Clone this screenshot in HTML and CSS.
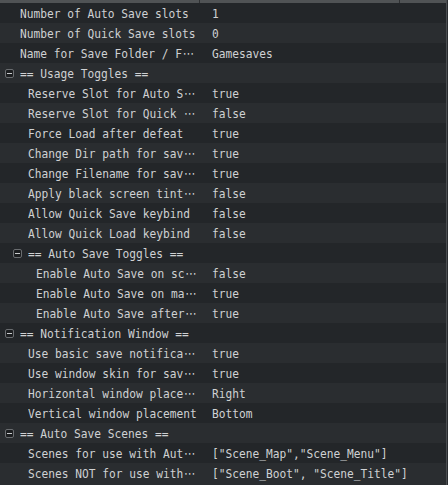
FILE: index.html
```html
<!DOCTYPE html>
<html>
<head>
<meta charset="utf-8">
<link rel="stylesheet" href="styles.css">
</head>
<body>
<div class="frame">
  <div class="header"><div class="hcol"></div><div class="hcol"></div></div>
  <div class="tree">
    <div class="row"><div class="name d0"><span class="t">Number of Auto Save slots</span></div><div class="value"><span class="t">1</span></div></div>
    <div class="row"><div class="name d0"><span class="t">Number of Quick Save slots</span></div><div class="value"><span class="t">0</span></div></div>
    <div class="row"><div class="name d0"><span class="t">Name for Save Folder / F<span class="el">⋯</span></span></div><div class="value"><span class="t">Gamesaves</span></div></div>
    <div class="row"><div class="name d0 group"><span class="toggle"></span><span class="t">== Usage Toggles ==</span></div><div class="value"></div></div>
    <div class="row"><div class="name d1"><span class="t">Reserve Slot for Auto S<span class="el">⋯</span></span></div><div class="value"><span class="t">true</span></div></div>
    <div class="row"><div class="name d1"><span class="t">Reserve Slot for Quick <span class="el">⋯</span></span></div><div class="value"><span class="t">false</span></div></div>
    <div class="row"><div class="name d1"><span class="t">Force Load after defeat</span></div><div class="value"><span class="t">true</span></div></div>
    <div class="row"><div class="name d1"><span class="t">Change Dir path for sav<span class="el">⋯</span></span></div><div class="value"><span class="t">true</span></div></div>
    <div class="row"><div class="name d1"><span class="t">Change Filename for sav<span class="el">⋯</span></span></div><div class="value"><span class="t">true</span></div></div>
    <div class="row"><div class="name d1"><span class="t">Apply black screen tint<span class="el">⋯</span></span></div><div class="value"><span class="t">false</span></div></div>
    <div class="row"><div class="name d1"><span class="t">Allow Quick Save keybind</span></div><div class="value"><span class="t">false</span></div></div>
    <div class="row"><div class="name d1"><span class="t">Allow Quick Load keybind</span></div><div class="value"><span class="t">false</span></div></div>
    <div class="row"><div class="name d1 group"><span class="toggle"></span><span class="t">== Auto Save Toggles ==</span></div><div class="value"></div></div>
    <div class="row"><div class="name d2"><span class="t">Enable Auto Save on sc<span class="el">⋯</span></span></div><div class="value"><span class="t">false</span></div></div>
    <div class="row"><div class="name d2"><span class="t">Enable Auto Save on ma<span class="el">⋯</span></span></div><div class="value"><span class="t">true</span></div></div>
    <div class="row"><div class="name d2"><span class="t">Enable Auto Save after<span class="el">⋯</span></span></div><div class="value"><span class="t">true</span></div></div>
    <div class="row"><div class="name d0 group"><span class="toggle"></span><span class="t">== Notification Window ==</span></div><div class="value"></div></div>
    <div class="row"><div class="name d1"><span class="t">Use basic save notifica<span class="el">⋯</span></span></div><div class="value"><span class="t">true</span></div></div>
    <div class="row"><div class="name d1"><span class="t">Use window skin for sav<span class="el">⋯</span></span></div><div class="value"><span class="t">true</span></div></div>
    <div class="row"><div class="name d1"><span class="t">Horizontal window place<span class="el">⋯</span></span></div><div class="value"><span class="t">Right</span></div></div>
    <div class="row"><div class="name d1"><span class="t">Vertical window placement</span></div><div class="value"><span class="t">Bottom</span></div></div>
    <div class="row"><div class="name d0 group"><span class="toggle"></span><span class="t">== Auto Save Scenes ==</span></div><div class="value"></div></div>
    <div class="row"><div class="name d1"><span class="t">Scenes for use with Aut<span class="el">⋯</span></span></div><div class="value"><span class="t">["Scene_Map","Scene_Menu"]</span></div></div>
    <div class="row"><div class="name d1"><span class="t">Scenes NOT for use with<span class="el">⋯</span></span></div><div class="value"><span class="t">["Scene_Boot", "Scene_Title"]</span></div></div>
    <div class="row filler"></div>
  </div>
</div>
</body>
</html>
```

FILE: styles.css
```css
html, body {
  margin: 0;
  padding: 0;
  background: #2a2d30;
  overflow: hidden;
}
.frame {
  width: 446px;
  height: 485px;
  border-right: 1px solid #4b4e51;
  overflow: hidden;
  font-family: "DejaVu Sans Mono", monospace;
  font-size: 13px;
  color: #cfd1d3;
}
.header {
  display: flex;
  height: 3px;
  background: #505355;
}
.hcol {
  width: 199px;
  border-right: 1px solid #2e3032;
}
.tree {
  display: flex;
  flex-direction: column;
}
.row {
  display: flex;
  height: 20px;
  flex: none;
  background: #232629;
}
.row:nth-child(even) {
  background: #2a2d30;
}
.row.filler {
  background: #2a2d30;
}
.name, .value {
  box-sizing: border-box;
  height: 20px;
  padding-top: 2px;
  line-height: 18px;
  white-space: nowrap;
  display: flex;
  align-items: flex-start;
}
.name {
  width: 200px;
  flex: none;
}
.value {
  flex: 1;
  padding-left: 12px;
}
.d0 { padding-left: 20px; }
.d1 { padding-left: 28px; }
.d2 { padding-left: 36px; }
.t {
  display: inline-block;
  transform: scaleX(0.862);
  transform-origin: 0 50%;
}
.el {
  font-family: "DejaVu Sans", sans-serif;
  margin-left: 1px;
}
.toggle {
  flex: none;
  box-sizing: border-box;
  width: 9px;
  height: 9px;
  margin-top: 4px;
  margin-left: -15px;
  margin-right: 6px;
  border: 1px solid #6a6d70;
  border-radius: 2px;
  background: #1c1e20;
  display: flex;
  align-items: center;
  justify-content: center;
}
.toggle::before {
  content: "";
  width: 5px;
  height: 1px;
  background: #c9cbcd;
}
```
